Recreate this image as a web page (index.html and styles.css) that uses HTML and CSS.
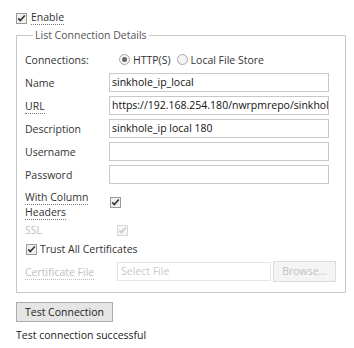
FILE: index.html
```html
<!DOCTYPE html>
<html>
<head>
<meta charset="utf-8">
<link rel="stylesheet" href="styles.css">
</head>
<body>
<div class="enable-row">
  <svg class="cb" width="11" height="11" viewBox="0 0 11 11"><rect x="0.5" y="0.5" width="10" height="10" fill="#f0f0f0" stroke="#9a9a9a"/><path d="M2.3 5.4 L4.3 7.6 L8.8 2.4" fill="none" stroke="#333" stroke-width="1.6"/></svg>
  <span class="tip">Enable</span>
</div>
<fieldset class="details">
  <legend>List Connection Details</legend>
  <div class="row r-conn">
    <span class="label">Connections:</span>
    <div class="radios">
      <span class="radio on"></span><span class="rtext">HTTP(S)</span>
      <span class="radio"></span><span class="rtext">Local File Store</span>
    </div>
  </div>
  <div class="row r-input">
    <span class="label">Name</span>
    <div class="input">sinkhole_ip_local</div>
  </div>
  <div class="row r-input">
    <span class="label"><span class="tip">URL</span></span>
    <div class="input">https://192.168.254.180/nwrpmrepo/sinkhol</div>
  </div>
  <div class="row r-input">
    <span class="label">Description</span>
    <div class="input">sinkhole_ip local 180</div>
  </div>
  <div class="row r-input">
    <span class="label">Username</span>
    <div class="input"></div>
  </div>
  <div class="row r-input">
    <span class="label">Password</span>
    <div class="input"></div>
  </div>
  <div class="row r-headers">
    <span class="label two"><span class="tip">With Column</span><br><span class="tip">Headers</span></span>
    <svg class="cb hdr-cb" width="11" height="11" viewBox="0 0 11 11"><rect x="0.5" y="0.5" width="10" height="10" fill="#f0f0f0" stroke="#9a9a9a"/><path d="M2.3 5.4 L4.3 7.6 L8.8 2.4" fill="none" stroke="#333" stroke-width="1.6"/></svg>
  </div>
  <div class="row r-ssl">
    <span class="label dis">SSL</span>
    <svg class="cb ssl-cb" width="11" height="11" viewBox="0 0 11 11"><rect x="0.5" y="0.5" width="10" height="10" fill="#f7f7f7" stroke="#d6d6d6"/><path d="M2.3 5.4 L4.3 7.6 L8.8 2.4" fill="none" stroke="#c8c8c8" stroke-width="1.6"/></svg>
  </div>
  <div class="row r-trust">
    <svg class="cb" width="11" height="11" viewBox="0 0 11 11"><rect x="0.5" y="0.5" width="10" height="10" fill="#f0f0f0" stroke="#9a9a9a"/><path d="M2.3 5.4 L4.3 7.6 L8.8 2.4" fill="none" stroke="#333" stroke-width="1.6"/></svg>
    <span class="trust-text">Trust All Certificates</span>
  </div>
  <div class="row r-cert">
    <span class="label dis"><span class="tip tip-dis">Certificate File</span></span>
    <div class="file-input">Select File</div>
    <div class="browse">Browse...</div>
  </div>
</fieldset>
<div class="test-btn">Test Connection</div>
<div class="status">Test connection successful</div>
</body>
</html>
```
FILE: styles.css
```css
html, body {
  margin: 0;
  padding: 0;
  background: #fff;
}
body {
  font-family: "Open Sans", "Noto Sans", sans-serif;
  font-size: 10.5px;
  color: #333;
  width: 354px;
  height: 348px;
  overflow: hidden;
}
.enable-row {
  display: flex;
  align-items: center;
  height: 14px;
  padding: 11px 0 0 16px;
}
.enable-row .cb {
  margin-right: 4px;
}
.cb {
  display: block;
  flex: none;
}
.tip {
  border-bottom: 1px dotted #777;
  line-height: 13px;
}
.tip-dis {
  border-bottom-color: #bbb;
}
.details {
  margin: 3px 0 0 16px;
  width: 330px;
  box-sizing: border-box;
  border: 1px solid #c8c8c8;
  padding: 0 16px 10px 8px;
  min-width: 0;
}
.details legend {
  padding: 0 2px;
  margin-left: 8px;
  line-height: 14px;
  color: #555;
}
.row {
  display: flex;
  align-items: center;
}
.label {
  width: 84px;
  flex: none;
}
.r-conn {
  height: 19px;
  margin-top: 8px;
}
.radios {
  display: flex;
  align-items: center;
  margin-left: 10px;
}
.radio {
  width: 9px;
  height: 9px;
  border: 1px solid #a8a8a8;
  border-radius: 50%;
  background: #f4f4f4;
  box-sizing: content-box;
  position: relative;
}
.radio.on::after {
  content: "";
  position: absolute;
  left: 2px;
  top: 2px;
  width: 5px;
  height: 5px;
  border-radius: 50%;
  background: #666;
}
.rtext {
  margin-left: 3px;
  margin-right: 6px;
}
.r-input {
  height: 19px;
  margin-top: 4px;
}
.input {
  flex: 1;
  height: 19px;
  box-sizing: border-box;
  border: 1px solid #c8c8c8;
  color: #111;
  padding: 0 2px;
  line-height: 17px;
  white-space: nowrap;
  overflow: hidden;
}
.r-headers {
  margin-top: 6px;
  align-items: flex-start;
}
.label.two {
  line-height: 15px;
}
.hdr-cb {
  margin-top: 7px;
  margin-left: 1px;
}
.r-ssl {
  height: 18px;
  margin-top: 1px;
}
.dis {
  color: #c0c0c0;
}
.ssl-cb {
  margin-left: 8px;
}
.r-trust {
  height: 18px;
  margin-top: 1px;
  padding-left: 1px;
}
.trust-text {
  margin-left: 3px;
}
.r-cert {
  height: 21px;
  margin-top: 3px;
}
.file-input {
  flex: none;
  margin-left: 8px;
  width: 154px;
  height: 19px;
  box-sizing: border-box;
  border: 1px solid #e4e4e4;
  color: #c8c8c8;
  padding: 0 3px;
  line-height: 17px;
}
.browse {
  flex: none;
  margin-left: 2px;
  width: 63px;
  height: 21px;
  box-sizing: border-box;
  border: 1px solid #dcdcdc;
  background: #f4f4f4;
  color: #c0c0c0;
  text-align: center;
  line-height: 19px;
}
.test-btn {
  margin: 9px 0 0 16px;
  width: 97px;
  height: 20px;
  box-sizing: border-box;
  border: 1px solid #ababab;
  background: #e5e5e5;
  color: #222;
  text-align: center;
  line-height: 18px;
}
.status {
  margin: 6px 0 0 16px;
  line-height: 14px;
  color: #222;
}
```
